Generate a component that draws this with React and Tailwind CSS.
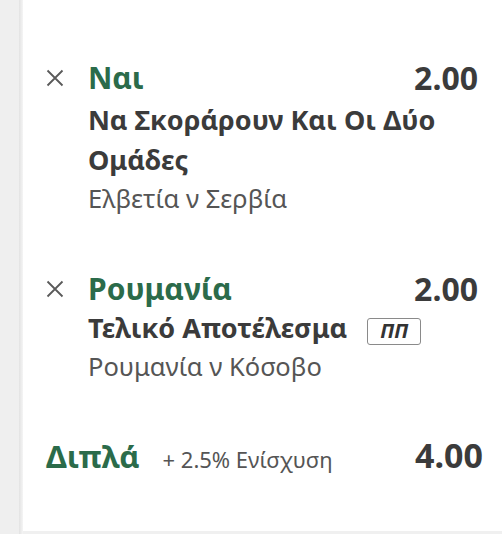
import React from "react";

const Cross = () => (
  <svg width="18" height="18" viewBox="0 0 18 18" className="shrink-0">
    <path d="M1.5 1.5 L16.5 16.5 M16.5 1.5 L1.5 16.5" stroke="#5a5a5a" strokeWidth="1.8" fill="none" />
  </svg>
);

const Selection = ({ name, market, event, odds, badge, gap }) => (
  <div className="flex flex-col">
    <div className="flex items-center h-[36px]">
      <div className="w-[42px] flex items-center">
        <Cross />
      </div>
      <div className="flex-1 text-[30px] font-bold text-[#2b6b4a] leading-[36px]">{name}</div>
      <div className="text-[32px] font-bold text-[#3b3b3b] leading-[36px]">{odds}</div>
    </div>
    <div className={`pl-[42px] pr-[30px] ${gap}`}>
      <div className="text-[27px] font-bold text-[#3b3b3b] leading-[40px]">
        {market}
        {badge && (
          <span className="ml-[20px] inline-flex items-center justify-center align-[0px] w-[54px] h-[27px] border-[1.5px] border-[#8a8a8a] rounded-[3px] text-[20px] italic font-bold text-[#333] leading-none">
            {badge}
          </span>
        )}
      </div>
      <div className="text-[25.5px] text-[#555] leading-[36px]">{event}</div>
    </div>
  </div>
);

export default function App() {
  return (
    <div
      className="flex w-[502px] h-[534px] bg-[#f0f0f0] overflow-hidden"
      style={{ fontFamily: '"Noto Sans", "Open Sans", sans-serif' }}
    >
      <div className="w-[19px] shrink-0 bg-[#efefef]" />
      <div className="w-[4px] shrink-0 bg-gradient-to-r from-[#e2e2e2] to-[#f5f5f5]" />
      <div className="flex-1 h-[531px] bg-white pl-[23px] pr-[24px] pt-[60px] flex flex-col">
        <Selection
          name="Ναι"
          odds="2.00"
          market="Να Σκοράρουν Και Οι Δύο Ομάδες"
          event="Ελβετία ν Σερβία"
          gap="mt-[4px]"
        />
        <div className="h-[55px] shrink-0" />
        <Selection
          name="Ρουμανία"
          odds="2.00"
          market="Τελικό Αποτέλεσμα"
          event="Ρουμανία ν Κόσοβο"
          badge="ΠΠ"
          gap="mt-[1px]"
        />
        <div className="flex items-baseline mt-[51px] h-[40px] leading-[40px] -mr-[5px]">
          <span className="text-[31px] font-bold text-[#2b6b4a]">Διπλά</span>
          <span className="ml-[23px] text-[22px] text-[#555]">+ 2.5% Ενίσχυση</span>
          <span className="ml-auto text-[34px] font-bold text-[#3b3b3b]">4.00</span>
        </div>
      </div>
    </div>
  );
}
